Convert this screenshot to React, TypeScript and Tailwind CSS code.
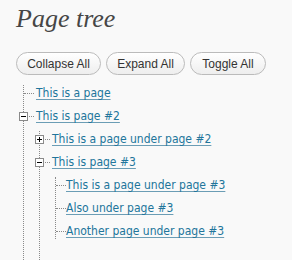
import React from "react";

type Node = { label: string; state?: "open" | "closed"; children?: Node[] };

const tree: Node[] = [
  { label: "This is a page" },
  {
    label: "This is page #2",
    state: "open",
    children: [
      { label: "This is a page under page #2", state: "closed" },
      {
        label: "This is page #3",
        state: "open",
        children: [
          { label: "This is a page under page #3" },
          { label: "Also under page #3" },
          { label: "Another page under page #3" },
        ],
      },
    ],
  },
];

function Toggle({ open }: { open: boolean }) {
  return (
    <span className="absolute left-[-5px] top-[4px] w-[9px] h-[9px] border border-[#8a8a8a] bg-white flex items-center justify-center">
      <span className="relative block w-[5px] h-[5px]">
        <span className="absolute left-0 top-[2px] w-[5px] h-[1px] bg-black" />
        {!open && <span className="absolute left-[2px] top-0 w-[1px] h-[5px] bg-black" />}
      </span>
    </span>
  );
}

function Row({ node, conn, level }: { node: Node; conn: string; level: number }) {
  return (
    <li className="list-none">
      <div className="relative h-[16px] flex items-center mb-[7px]">
        <span className={`${conn} border-t border-dotted border-[#8a8a8a] h-0`} />
        <a
          href="#"
          className="text-[12px] leading-[16px] text-[#21759b] underline decoration-[#6b9db5] underline-offset-[2px] whitespace-nowrap"
          style={{ fontFamily: '"DejaVu Sans Condensed", "DejaVu Sans", sans-serif', fontStretch: "condensed" }}
        >
          {node.label}
        </a>
        {node.state && <Toggle open={node.state === "open"} />}
      </div>
      {node.children && <Level nodes={node.children} level={level + 1} />}
    </li>
  );
}

function Level({ nodes, level }: { nodes: Node[]; level: number }) {
  const ml = level === 0 ? "ml-[7px]" : "ml-[15px]";
  const pb = level < 2 ? "pb-[40px]" : "";
  const conn = level === 2 ? "w-[10px] mr-[0px]" : "w-[10px] mr-[2px]";
  return (
    <ul className={`${ml} ${pb} border-l border-dotted border-[#8a8a8a] m-0 p-0`}>
      {nodes.map((n, i) => (
        <Row key={i} node={n} conn={conn} level={level} />
      ))}
    </ul>
  );
}

function Btn({ label, w }: { label: string; w: string }) {
  return (
    <button
      className={`${w} h-[23px] rounded-full border border-[#bbbbbb] bg-[linear-gradient(#ffffff,#eeeeee)] text-[12px] text-[#333333] flex items-center justify-center`}
      style={{ fontFamily: '"Liberation Sans", Arial, sans-serif' }}
    >
      {label}
    </button>
  );
}

export default function App() {
  return (
    <div className="w-[292px] h-[260px] overflow-hidden bg-[#f9f9f9] pl-[16px]">
      <h2
        className="text-[26px] italic text-[#464646] leading-[30px] pt-[4px] m-0 font-normal"
        style={{ fontFamily: '"Liberation Serif", "Times New Roman", serif' }}
      >
        Page tree
      </h2>
      <div className="flex gap-[5px] mt-[18px]">
        <Btn label="Collapse All" w="w-[85px]" />
        <Btn label="Expand All" w="w-[79px]" />
        <Btn label="Toggle All" w="w-[76px]" />
      </div>
      <div className="mt-[10px]">
        <Level nodes={tree} level={0} />
      </div>
    </div>
  );
}
